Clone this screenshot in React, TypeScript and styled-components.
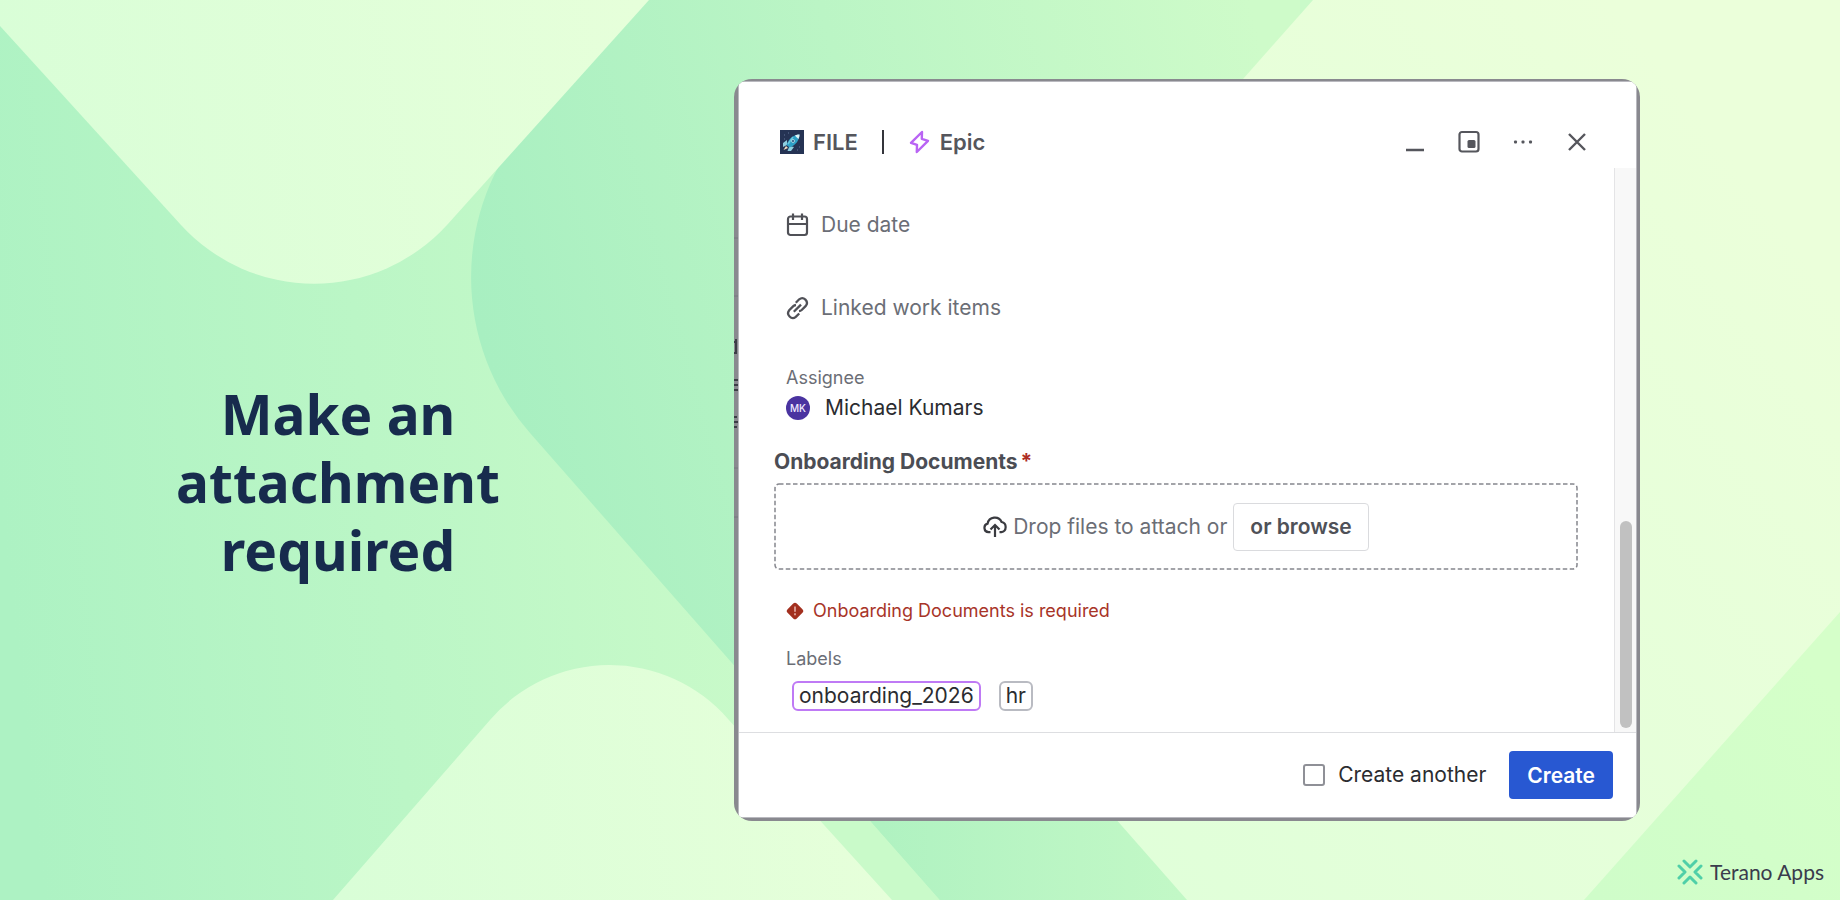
import React from "react";
import styled, { createGlobalStyle } from "styled-components";

const GlobalStyle = createGlobalStyle`
  *, *::before, *::after { box-sizing: border-box; }
  html, body { margin: 0; padding: 0; }
  body { font-family: Inter, "Liberation Sans", sans-serif; color: #2b2c30; }
  h1, h2, p { margin: 0; }
  button, input { font: inherit; }
`;

const Page = styled.main`
  position: relative;
  min-height: 100vh;
  display: grid;
  grid-template-columns: minmax(0, 676fr) minmax(0, 906fr);
  column-gap: 58px;
  align-items: center;
  padding: 40px 200px 40px 0;
  overflow: hidden;
`;

const Backdrop = styled.svg`
  position: absolute;
  inset: 0;
  width: 100%;
  height: 100%;
`;

const Headline = styled.h1`
  position: relative;
  justify-self: center;
  max-width: 400px;
  padding-top: 64px;
  font-family: "Noto Sans", "Open Sans", sans-serif;
  font-size: 55px;
  font-weight: 700;
  line-height: 68px;
  text-align: center;
  color: #172b4d;
`;

const Frame = styled.section`
  position: relative;
  padding: 3px 4px 4px 5px;
  border-radius: 18px;
  background: #89898f;
  overflow: hidden;
`;

const Dialog = styled.div`
  background: #fff;
  box-shadow: 0 0 0 1px #b9b9bf;
`;

const EdgeMarks = styled.svg`
  position: absolute;
  left: 0;
  top: 0;
  width: 4px;
  height: 100%;
`;

const Header = styled.header`
  display: flex;
  align-items: center;
  justify-content: space-between;
  height: 86px;
  padding: 33px 47px 0 41px;
`;

const Crumbs = styled.div`
  display: flex;
  align-items: center;
  font-size: 22px;
  font-weight: 600;
  line-height: 24px;
  color: #55565c;
`;

const Crumb = styled.span<{ $gap: number }>`
  display: inline-flex;
  align-items: center;
  gap: ${(p) => p.$gap}px;
`;

const Divider = styled.span`
  width: 2px;
  height: 24px;
  margin: 0 25px 0 24px;
  background: #34353b;
`;

const Actions = styled.div`
  display: flex;
  gap: 30px;
`;

const IconButton = styled.button`
  display: flex;
  width: 24px;
  height: 24px;
  padding: 0;
  border: 0;
  background: none;
  color: #55565c;
`;

const Body = styled.div`
  display: flex;
  border-bottom: 1px solid #dddee1;
`;

const Fields = styled.div`
  flex: 1;
  min-width: 0;
  padding: 45px 36px 21px 35px;
`;

const Track = styled.div`
  display: flex;
  flex-direction: column;
  justify-content: flex-end;
  width: 22px;
  padding: 4px 4px 4px 5px;
  border-left: 1px solid #e4e4e6;
  background: #f8f8f8;
`;

const Thumb = styled.div`
  width: 12px;
  height: 207px;
  border-radius: 6px;
  background: #c1c1c1;
`;

const Row = styled.div<{ $after: number; $gap: number }>`
  display: flex;
  align-items: center;
  gap: ${(p) => p.$gap}px;
  height: 24px;
  margin: 0 0 ${(p) => p.$after}px 12px;
`;

const Placeholder = styled.span`
  font-size: 21px;
  line-height: 24px;
  color: #6b6e76;
`;

const Caption = styled.p<{ $after: number }>`
  margin: 0 0 ${(p) => p.$after}px 12px;
  font-size: 18px;
  line-height: 24px;
  color: #6b6e76;
`;

const Value = styled.span`
  font-size: 21px;
  line-height: 24px;
  color: #2b2c30;
`;

const Avatar = styled.span`
  width: 24px;
  height: 24px;
  border-radius: 50%;
  background: #4a33a0;
  color: #efeaff;
  font-size: 10px;
  font-weight: 500;
  line-height: 24px;
  text-align: center;
`;

const FieldTitle = styled.h2`
  display: flex;
  gap: 3px;
  margin-bottom: 9px;
  font-size: 21px;
  font-weight: 700;
  line-height: 24px;
  color: #4b4d54;
`;

const Required = styled.span`
  color: #ae2e24;
`;

const DropWrap = styled.div`
  position: relative;
  margin-bottom: 29px;
`;

const DropOutline = styled.svg`
  position: absolute;
  inset: 0;
  width: 100%;
  height: 100%;
`;

const DashedRect = styled.rect`
  x: 1px;
  y: 1px;
  width: calc(100% - 2px);
  height: calc(100% - 2px);
  rx: 4px;
  fill: none;
  stroke: #85868d;
  stroke-width: 1.5px;
  stroke-dasharray: 4.500 2.500;
`;

const DropZone = styled.div`
  display: flex;
  align-items: center;
  justify-content: center;
  gap: 6px;
  height: 87px;
`;

const BrowseButton = styled.button`
  position: relative;
  height: 48px;
  padding: 0 16px;
  border: 1px solid #dadbde;
  border-radius: 4px;
  background: #fff;
  font-size: 21px;
  font-weight: 600;
  color: #4f5158;
`;

const ErrorText = styled.span`
  font-size: 18px;
  line-height: 24px;
  color: #a83428;
`;

const Chips = styled.div`
  display: flex;
  gap: 18px;
  margin-left: 18px;
`;

const Chip = styled.span<{ $color: string }>`
  height: 30px;
  padding: 0 5px;
  border: 2px solid ${(p) => p.$color};
  border-radius: 6px;
  font-size: 21px;
  line-height: 26px;
  color: #2b2c30;
`;

const Footer = styled.footer`
  display: flex;
  align-items: center;
  justify-content: flex-end;
  padding: 18px 23px 18px 0;
`;

const CheckLabel = styled.label`
  display: flex;
  align-items: center;
  gap: 13px;
  margin-right: 23px;
  font-size: 21px;
  line-height: 24px;
`;

const Checkbox = styled.input`
  appearance: none;
  width: 22px;
  height: 22px;
  margin: 0;
  border: 2px solid #8f9097;
  border-radius: 3px;
  background: #fff;
`;

const CreateButton = styled.button`
  height: 48px;
  padding: 0 18px;
  border: 0;
  border-radius: 4px;
  background: #2858d2;
  font-size: 21px;
  font-weight: 600;
  color: #fff;
`;

const Brand = styled.a`
  position: absolute;
  right: 16px;
  bottom: 14px;
  display: flex;
  align-items: center;
  gap: 7px;
  font-family: Lato, sans-serif;
  font-size: 21px;
  line-height: 28px;
  color: #3a3b4c;
  text-decoration: none;
`;

const Waves = () => (
  <Backdrop viewBox="0 0 1840 900" preserveAspectRatio="none" aria-hidden="true">
    <defs>
      <linearGradient id="base" gradientUnits="userSpaceOnUse" x1="0" y1="500" x2="740" y2="420">
        <stop offset="0" stopColor="#adf2c3" />
        <stop offset="1" stopColor="#c9fac9" />
      </linearGradient>
      <linearGradient id="crest" gradientUnits="userSpaceOnUse" x1="0" y1="100" x2="640" y2="0">
        <stop offset="0" stopColor="#d9fed7" />
        <stop offset="1" stopColor="#e6ffda" />
      </linearGradient>
      <linearGradient id="hill" gradientUnits="userSpaceOnUse" x1="340" y1="900" x2="880" y2="820">
        <stop offset="0" stopColor="#d9fed7" />
        <stop offset="1" stopColor="#e6ffda" />
      </linearGradient>
      <linearGradient id="band" gradientUnits="userSpaceOnUse" x1="480" y1="330" x2="1280" y2="110">
        <stop offset="0" stopColor="#a8efc1" />
        <stop offset="1" stopColor="#cefbc9" />
      </linearGradient>
      <linearGradient id="bandLow" gradientUnits="userSpaceOnUse" x1="880" y1="860" x2="1180" y2="860">
        <stop offset="0" stopColor="#b0f2c1" />
        <stop offset="1" stopColor="#c2f8c6" />
      </linearGradient>
      <linearGradient id="glow" gradientUnits="userSpaceOnUse" x1="1100" y1="860" x2="1840" y2="300">
        <stop offset="0" stopColor="#e0ffd9" />
        <stop offset="1" stopColor="#ebffda" />
      </linearGradient>
      <linearGradient id="corner" gradientUnits="userSpaceOnUse" x1="1600" y1="900" x2="1840" y2="700">
        <stop offset="0" stopColor="#cffdc9" />
        <stop offset="1" stopColor="#d5ffc9" />
      </linearGradient>
    </defs>
    <rect width="1840" height="900" fill="url(#base)" />
    <path d="M637 0L530 121A236 236 0 0 0 530 433L940 900H1300V0Z" fill="url(#band)" />
    <path d="M850 798L940 900H1300V798Z" fill="url(#bandLow)" />
    <path d="M0 0V26L181 225A180 180 0 0 0 447 225L649 0Z" fill="url(#crest)" />
    <path d="M333 900L490 720A157 157 0 0 1 728 719L892 900Z" fill="url(#hill)" />
    <path d="M1313 0L853 520L1187 900H1840V0Z" fill="url(#glow)" />
    <path d="M1584 900L1840 612V900Z" fill="url(#corner)" />
  </Backdrop>
);

const RocketIcon = () => (
  <svg width="24" height="24" viewBox="0 0 24 24" aria-hidden="true">
    <rect width="24" height="24" fill="#253354" />
    <path d="M7 10L3 13L3 17L7 15ZM14 17L11 21L7.500 21L9.500 16Z" fill="#8fcfe0" />
    <path d="M6 16L3.500 20L8 18Z" fill="#f3dfc0" />
    <path d="M19.500 4.500C14 4.500 9 8 6.500 15L9.500 17.500C16 15 19.500 10 19.500 4.500Z" fill="#2d9fc6" />
    <path d="M19.500 4.500C17.500 4.500 16 5 14.800 5.600L18.400 9C19 7.800 19.500 6.500 19.500 4.500Z" fill="#dff3f6" />
    <path d="M13 7L8 14" stroke="#6cc8dd" strokeWidth="1.500" />
    <circle cx="13" cy="11" r="1.500" fill="#244a78" stroke="#bfe8f2" strokeWidth="0.800" />
    <path d="M4 5h1M8 3h1M19 17h1M17 20h1M4 9h1" stroke="#7187a8" strokeWidth="0.800" />
  </svg>
);

const EpicIcon = () => (
  <svg width="21" height="24" viewBox="0 0 21 24" fill="none" stroke="#b964f4" strokeWidth="2.400" strokeLinejoin="round" aria-hidden="true">
    <path d="M13 2L2 12.800L8 14.800L7.800 22L19 10.800L12.800 8.800Z" />
  </svg>
);

const MinimizeIcon = () => (
  <svg width="24" height="24" viewBox="0 0 24 24" aria-hidden="true">
    <path d="M3 20H21" stroke="currentColor" strokeWidth="2.500" />
  </svg>
);

const ShrinkIcon = () => (
  <svg width="24" height="24" viewBox="0 0 24 24" aria-hidden="true">
    <rect x="2.500" y="2" width="19" height="19.500" rx="2.500" fill="none" stroke="currentColor" strokeWidth="2.200" />
    <rect x="10.500" y="10" width="8" height="8" rx="1.500" fill="currentColor" />
  </svg>
);

const MoreIcon = () => (
  <svg width="24" height="24" viewBox="0 0 24 24" fill="currentColor" aria-hidden="true">
    <rect x="3" y="10.500" width="3" height="3" rx="1" />
    <rect x="10.500" y="10.500" width="3" height="3" rx="1" />
    <rect x="18" y="10.500" width="3" height="3" rx="1" />
  </svg>
);

const CloseIcon = () => (
  <svg width="24" height="24" viewBox="0 0 24 24" aria-hidden="true">
    <path d="M4 4L20 20M20 4L4 20" stroke="currentColor" strokeWidth="2.400" />
  </svg>
);

const CalendarIcon = () => (
  <svg width="23" height="24" viewBox="0 0 23 24" fill="none" stroke="#505157" strokeWidth="2.200" aria-hidden="true">
    <rect x="2" y="3.500" width="19" height="18.500" rx="2.500" />
    <path d="M2 11H21M7 0.500V7M16 0.500V7" />
  </svg>
);

const LinkIcon = () => (
  <svg width="23" height="24" viewBox="0 0 23 24" fill="none" stroke="#505157" strokeWidth="2.300" strokeLinecap="butt" aria-hidden="true">
    <path d="M7.800 15.800L15 8.600" />
    <path d="M9.800 6.700L13.200 3.300A4.700 4.700 0 0 1 19.800 9.900L15.700 14Q14.600 15 13 15.200" />
    <path d="M13.200 17.500L9.800 20.900A4.700 4.700 0 0 1 3.200 14.300L7.300 10.200Q8.400 9.200 10 9" />
  </svg>
);

const UploadIcon = () => (
  <svg width="24" height="24" viewBox="0 0 24 24" fill="none" stroke="#3a3b40" strokeWidth="2.200" aria-hidden="true">
    <path d="M7.500 17.200H5.500A4.400 4.400 0 0 1 4.600 8.600A7.400 7.400 0 0 1 18.600 7A5.200 5.200 0 0 1 18.300 17.200H16.500" />
    <path d="M12 22V11M7.500 14.500L12 10L16.500 14.500" />
  </svg>
);

const ErrorIcon = () => (
  <svg width="18" height="18" viewBox="0 0 18 18" aria-hidden="true">
    <rect x="2.500" y="2.500" width="13" height="13" rx="2.500" transform="rotate(45 9 9)" fill="#a3301f" />
    <path d="M9 4.500V9.800M9 11.300V13.300" stroke="#e0a59c" strokeWidth="1.800" />
  </svg>
);

const BrandIcon = () => (
  <svg width="26" height="26" viewBox="0 0 26 26" fill="none" stroke="#4fcfa8" strokeWidth="3" strokeLinecap="round" strokeLinejoin="round" aria-hidden="true">
    <path d="M7 2L13 8L19 2M7 24L13 18L19 24M2 7L8 13L2 19M24 7L18 13L24 19" />
  </svg>
);

export default function App() {
  return (
    <>
      <GlobalStyle />
      <Page>
        <Waves />
        <Headline>Make an attachment required</Headline>
        <Frame aria-label="Create work item">
          <EdgeMarks aria-hidden="true">
            <path d="M0 263H1M0 274H1M2 260V275M0 301H4M0 306H4M0 311H4M0 338H3M0 343H4M0 348H3" stroke="#3c3d46" strokeWidth="2" />
            <path d="M0 159H4M0 217H4M0 389H4M0 438H4" stroke="#77777e" />
          </EdgeMarks>
          <Dialog>
            <Header>
              <Crumbs>
                <Crumb $gap={9}>
                  <RocketIcon />
                  FILE
                </Crumb>
                <Divider />
                <Crumb $gap={10}>
                  <EpicIcon />
                  Epic
                </Crumb>
              </Crumbs>
              <Actions>
                <IconButton type="button" aria-label="Minimize"><MinimizeIcon /></IconButton>
                <IconButton type="button" aria-label="Shrink"><ShrinkIcon /></IconButton>
                <IconButton type="button" aria-label="More actions"><MoreIcon /></IconButton>
                <IconButton type="button" aria-label="Close"><CloseIcon /></IconButton>
              </Actions>
            </Header>
            <Body>
              <Fields>
                <Row $after={59} $gap={12}>
                  <CalendarIcon />
                  <Placeholder>Due date</Placeholder>
                </Row>
                <Row $after={46} $gap={12}>
                  <LinkIcon />
                  <Placeholder>Linked work items</Placeholder>
                </Row>
                <Caption $after={6}>Assignee</Caption>
                <Row $after={30} $gap={15}>
                  <Avatar>MK</Avatar>
                  <Value>Michael Kumars</Value>
                </Row>
                <FieldTitle>
                  Onboarding Documents
                  <Required>*</Required>
                </FieldTitle>
                <DropWrap>
                  <DropOutline aria-hidden="true">
                    <DashedRect />
                  </DropOutline>
                  <DropZone>
                    <UploadIcon />
                    <Placeholder>Drop files to attach or</Placeholder>
                    <BrowseButton type="button">or browse</BrowseButton>
                  </DropZone>
                </DropWrap>
                <Row $after={24} $gap={9} role="alert">
                  <ErrorIcon />
                  <ErrorText>Onboarding Documents is required</ErrorText>
                </Row>
                <Caption $after={10}>Labels</Caption>
                <Chips>
                  <Chip $color="#bf7af5">onboarding_2026</Chip>
                  <Chip $color="#b9bbc2">hr</Chip>
                </Chips>
              </Fields>
              <Track>
                <Thumb />
              </Track>
            </Body>
            <Footer>
              <CheckLabel>
                <Checkbox type="checkbox" />
                Create another
              </CheckLabel>
              <CreateButton type="button">Create</CreateButton>
            </Footer>
          </Dialog>
        </Frame>
        <Brand href="#">
          <BrandIcon />
          Terano Apps
        </Brand>
      </Page>
    </>
  );
}
